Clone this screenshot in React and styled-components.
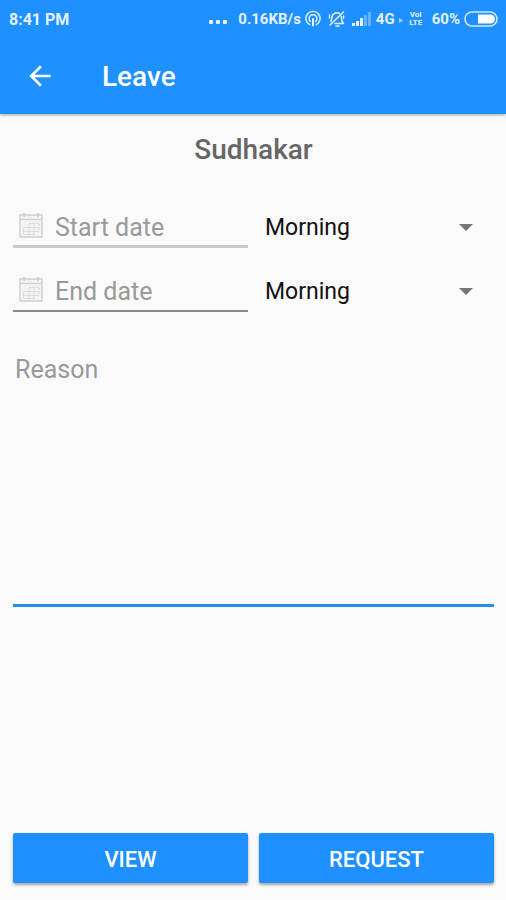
import React, { useState } from 'react';
import styled, { createGlobalStyle } from 'styled-components';

const GlobalStyle = createGlobalStyle`
  * {
    box-sizing: border-box;
  }

  body {
    margin: 0;
    background: #fafafa;
    font-family: Roboto, 'Liberation Sans', sans-serif;
  }

  input,
  select,
  textarea,
  button {
    font-family: inherit;
  }
`;

const Screen = styled.div`
  display: flex;
  flex-direction: column;
  min-height: 100vh;
`;

const Header = styled.header`
  background: #1e90ff;
  color: #fff;
  box-shadow: 0 1px 3px rgba(0, 0, 0, 0.35);
`;

const StatusBar = styled.div`
  display: flex;
  align-items: center;
  justify-content: space-between;
  height: 38px;
  padding: 0 8px 0 9px;
  color: #e4f2ff;
  font-size: 15px;
  font-weight: 700;
`;

const Clock = styled.span`
  font-size: 16px;
`;

const StatusGroup = styled.div`
  display: flex;
  align-items: center;
  gap: ${({ $gap }) => $gap}px;

  svg {
    display: block;
    flex: none;
  }
`;

const Volte = styled.span`
  display: flex;
  flex-direction: column;
  align-items: center;
  width: 18px;
  font-size: 8px;
  line-height: 8px;
`;

const Toolbar = styled.div`
  display: flex;
  align-items: center;
  gap: 46px;
  height: 76px;
  padding: 0 24px;
`;

const BackButton = styled.button`
  display: flex;
  padding: 0;
  border: 0;
  background: none;
  color: #fff;
  cursor: pointer;
`;

const Title = styled.h1`
  margin: 0;
  padding-top: 2px;
  font-size: 28px;
  font-weight: 500;
  line-height: 32px;
`;

const Form = styled.form`
  display: flex;
  flex: 1;
  flex-direction: column;
  padding: 16px 12px 17px 13px;
`;

const EmployeeName = styled.h2`
  margin: 0 0 38px;
  color: #666;
  font-size: 28px;
  font-weight: 500;
  line-height: 40px;
  text-align: center;
`;

const DateRow = styled.div`
  display: grid;
  grid-template-columns: repeat(2, minmax(0, 1fr));
  gap: 11px;
  height: 40px;
  margin-bottom: 24px;
`;

const DateField = styled.label`
  display: flex;
  align-items: center;
  gap: 12px;
  min-width: 0;
  padding-left: 6px;
  border-bottom: ${({ $active }) => ($active ? '2px solid #8a8a8a' : '3px solid #cacaca')};

  svg {
    flex: none;
  }
`;

const DateInput = styled.input`
  flex: 1;
  min-width: 0;
  padding: 2px 0 0;
  border: 0;
  outline: 0;
  background: none;
  color: #222;
  font-size: 25px;
  line-height: 32px;

  &::placeholder {
    color: #999;
    opacity: 1;
  }
`;

const SelectField = styled.div`
  display: flex;
  align-items: center;
  min-width: 0;
  padding: 0 21px 0 6px;

  svg {
    flex: none;
    pointer-events: none;
  }
`;

const Select = styled.select`
  flex: 1;
  min-width: 0;
  padding: 0;
  border: 0;
  outline: 0;
  appearance: none;
  background: none;
  color: #111;
  font-size: 23px;
  line-height: 32px;
`;

const Reason = styled.textarea`
  display: block;
  width: 100%;
  height: 261px;
  margin-top: 10px;
  padding: 8px 2px;
  border: 0;
  border-bottom: 3px solid #2b8ee6;
  border-radius: 0;
  outline: 0;
  resize: none;
  background: none;
  color: #222;
  font-size: 25px;
  line-height: 32px;

  &::placeholder {
    color: #999;
    opacity: 1;
  }
`;

const Actions = styled.div`
  display: grid;
  grid-template-columns: 1fr 1fr;
  gap: 11px;
  margin-top: auto;
`;

const ActionButton = styled.button`
  height: 50px;
  padding: 2px 0 0;
  border: 0;
  border-radius: 2px;
  background: #1e90ff;
  box-shadow: 0 2px 3px rgba(0, 0, 0, 0.35);
  color: #fff;
  font-size: 22px;
  font-weight: 500;
  cursor: pointer;
`;

const ArrowIcon = () => (
  <svg width="32" height="32" viewBox="0 0 24 24" fill="currentColor" aria-hidden="true">
    <path d="M20 11H7.83l5.59-5.59L12 4l-8 8 8 8 1.41-1.41L7.83 13H20v-2z" />
  </svg>
);

const DotsIcon = () => (
  <svg width="18" height="16" viewBox="0 0 18 16" fill="currentColor" aria-hidden="true">
    <rect x="0" y="9" width="4" height="4" rx="1" />
    <rect x="7" y="9" width="4" height="4" rx="1" />
    <rect x="14" y="9" width="4" height="4" rx="1" />
  </svg>
);

const HotspotIcon = () => (
  <svg width="16" height="18" viewBox="0 0 16 18" fill="none" stroke="currentColor" strokeWidth="1.4" strokeLinecap="round" aria-hidden="true">
    <path d="M4.6 14.7a7.1 7.1 0 1 1 6.8 0" />
    <path d="M5.3 11.4a3.9 3.9 0 1 1 5.4 0" />
    <path d="M8 9v6.5" strokeWidth="2" />
  </svg>
);

const MutedIcon = () => (
  <svg width="17" height="18" viewBox="0 0 17 18" fill="none" stroke="currentColor" strokeWidth="1.5" strokeLinecap="round" strokeLinejoin="round" aria-hidden="true">
    <path d="M3 11.5L4 7a4.800 4.800 0 0 1 7.500-3.300M13.300 6.500L14 11l1.500 2.500H7" />
    <path d="M15.500 2L2 15M8 16h3M1.500 5v3M15.500 6v2" />
  </svg>
);

const SignalIcon = () => (
  <svg width="20" height="14" viewBox="0 0 20 14" fill="currentColor" aria-hidden="true">
    <rect x="0" y="11" width="3" height="3" />
    <rect x="4" y="9" width="3" height="5" />
    <rect x="8" y="6" width="3" height="8" />
    <rect x="12" y="3" width="3" height="11" opacity="0.35" />
    <rect x="16" y="0" width="3" height="14" opacity="0.35" />
  </svg>
);

const DataIcon = () => (
  <svg width="4" height="8" viewBox="0 0 4 8" fill="currentColor" opacity="0.7" aria-hidden="true">
    <path d="M0 3l4 2.5L0 8z" />
  </svg>
);

const BatteryIcon = () => (
  <svg width="34" height="16" viewBox="0 0 34 16" aria-hidden="true">
    <rect x="1" y="1" width="32" height="14" rx="7" fill="none" stroke="#cfe7ff" strokeWidth="1.6" />
    <path d="M14 3.5h12.5a4.5 4.5 0 0 1 0 9H14z" fill="#fff" />
  </svg>
);

const CalendarIcon = () => (
  <svg width="24" height="28" viewBox="0 0 24 28" fill="none" stroke="#d2d2d2" aria-hidden="true">
    <rect x="1" y="2" width="22" height="22" strokeWidth="1.6" fill="#f3f3f3" />
    <path d="M1 6.5h22" strokeWidth="1.4" />
    <path d="M5 0v4M19 0v4" strokeWidth="2" />
    <path
      d="M10 10.5h10M4.5 14.500h15.500M4.500 18.500h15.500M4.500 21.500h11M4.500 14.500v7M10 10.500v11M15 10.500v11M20 10.500v8"
      stroke="#dcdcdc"
    />
  </svg>
);

const CaretIcon = () => (
  <svg width="14" height="8" viewBox="0 0 14 8" fill="#757575" aria-hidden="true">
    <path d="M0 0h14L7 7z" />
  </svg>
);

const LeaveDate = ({ label, active, value, onChange, session, setSession }) => (
  <DateRow>
    <DateField $active={active}>
      <CalendarIcon />
      <DateInput
        type="text"
        placeholder={label}
        aria-label={label}
        value={value}
        onChange={(e) => onChange(e.target.value)}
      />
    </DateField>
    <SelectField>
      <Select
        aria-label={`${label} session`}
        value={session}
        onChange={(e) => setSession(e.target.value)}
      >
        <option>Morning</option>
        <option>Afternoon</option>
      </Select>
      <CaretIcon />
    </SelectField>
  </DateRow>
);

const App = () => {
  const [startDate, setStartDate] = useState('');
  const [endDate, setEndDate] = useState('');
  const [startSession, setStartSession] = useState('Morning');
  const [endSession, setEndSession] = useState('Morning');
  const [reason, setReason] = useState('');

  return (
    <>
      <GlobalStyle />
      <Screen>
        <Header>
          <StatusBar>
            <Clock>8:41 PM</Clock>
            <StatusGroup $gap={7}>
              <StatusGroup $gap={11}>
                <DotsIcon />
                <StatusGroup $gap={4}>
                  <span>0.16KB/s</span>
                  <HotspotIcon />
                </StatusGroup>
              </StatusGroup>
              <MutedIcon />
              <StatusGroup $gap={4}>
                <SignalIcon />
                <span>4G</span>
                <DataIcon />
                <Volte>
                  <span>VoI</span>
                  <span>LTE</span>
                </Volte>
              </StatusGroup>
              <StatusGroup $gap={4}>
                <span>60%</span>
                <BatteryIcon />
              </StatusGroup>
            </StatusGroup>
          </StatusBar>
          <Toolbar>
            <BackButton type="button" aria-label="Back">
              <ArrowIcon />
            </BackButton>
            <Title>Leave</Title>
          </Toolbar>
        </Header>
        <Form onSubmit={(e) => e.preventDefault()}>
          <EmployeeName>Sudhakar</EmployeeName>
          <LeaveDate
            label="Start date"
            value={startDate}
            onChange={setStartDate}
            session={startSession}
            setSession={setStartSession}
          />
          <LeaveDate
            label="End date"
            active
            value={endDate}
            onChange={setEndDate}
            session={endSession}
            setSession={setEndSession}
          />
          <Reason
            placeholder="Reason"
            aria-label="Reason"
            value={reason}
            onChange={(e) => setReason(e.target.value)}
          />
          <Actions>
            <ActionButton type="button">VIEW</ActionButton>
            <ActionButton type="submit">REQUEST</ActionButton>
          </Actions>
        </Form>
      </Screen>
    </>
  );
};

export default App;
